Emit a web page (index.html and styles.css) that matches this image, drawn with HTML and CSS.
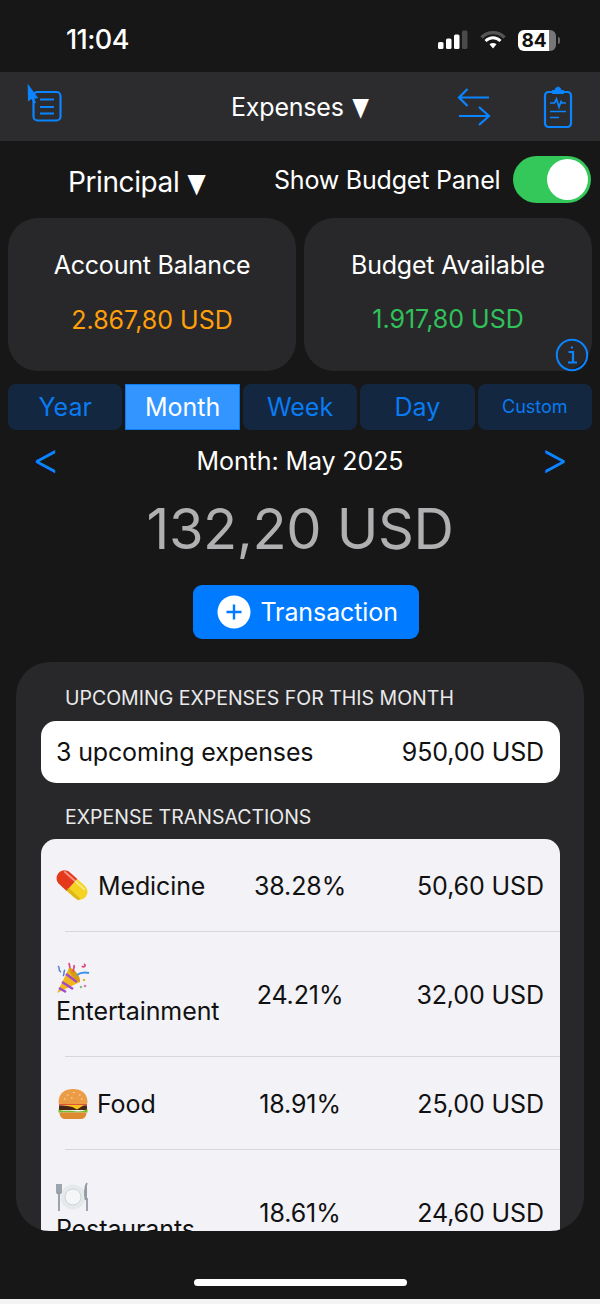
FILE: index.html
```html
<!DOCTYPE html>
<html lang="en">
<head>
<meta charset="utf-8">
<title>Expenses</title>
<link rel="stylesheet" href="styles.css">
</head>
<body>
<div class="screen">
  <header class="status">
    <span class="time">11:04</span>
    <div class="status-icons">
      <svg class="signal" width="30" height="20" viewBox="0 0 30 20"><rect x="0" y="12" width="5.500" height="7" rx="1.500" fill="#fff"/><rect x="8" y="8.500" width="5.500" height="10.500" rx="1.500" fill="#fff"/><rect x="16" y="4.500" width="5.500" height="14.500" rx="1.500" fill="#fff"/><rect x="24" y="0.500" width="5.500" height="18.500" rx="1.500" fill="#4a4a4a"/></svg>
      <svg class="wifi" width="26" height="20" viewBox="0 0 26 20"><path d="M1.500 7.500C8 1 18 1 24.500 7.500" fill="none" stroke="#555" stroke-width="3.400"/><path d="M5.500 11C10 6.800 16 6.800 20.500 11" fill="none" stroke="#fff" stroke-width="3"/><path d="M9.500 14.300C11.600 12.500 14.400 12.500 16.500 14.300L13 18.500Z" fill="#fff"/></svg>
      <div class="battery"><span class="battery-level">84</span><i class="battery-tip"></i></div>
    </div>
  </header>

  <nav class="navbar">
    <svg class="nav-list" width="38" height="42" viewBox="0 0 38 42"><rect x="7.500" y="9" width="27" height="28.500" rx="4" fill="none" stroke="#0a84ff" stroke-width="2.200"/><path d="M14 16.500H28M14 24H28M14 30.500H28" stroke="#0a84ff" stroke-width="2.200"/><path d="M1.700 0.800L12.300 15.200L8 15.500L10 19.800L8 20.500L5.500 16L2 18.500Z" fill="#0a84ff"/></svg>
    <div class="nav-title">Expenses <span class="tri">▼</span></div>
    <svg class="nav-swap" width="34" height="42" viewBox="0 0 34 42"><path d="M2 11.500H32M10.500 3L2 11.500L10.500 20M2 30H32M22 21L32 30L22 39" fill="none" stroke="#0a84ff" stroke-width="2.200"/></svg>
    <svg class="nav-clip" width="30" height="44" viewBox="0 0 30 44"><rect x="2" y="7" width="26" height="35" rx="3.500" fill="none" stroke="#0a84ff" stroke-width="2.200"/><path d="M9.500 8.500V5.500H12C12.500 1 17.500 1 18 5.500H20.500V8.500Z" fill="#0a84ff" stroke="#0a84ff"/><path d="M7 18H11.500L13.500 14L16 22L18 16.500L19 18H23M7 26.500H23M7 32.500H16" fill="none" stroke="#0a84ff" stroke-width="1.700"/></svg>
  </nav>

  <section class="account-row">
    <div class="account-picker">Principal <span class="tri tri-wide">▼</span></div>
    <div class="budget-toggle">
      <span>Show Budget Panel</span>
      <div class="switch"><i class="knob"></i></div>
    </div>
  </section>

  <section class="cards">
    <article class="card">
      <h2>Account Balance</h2>
      <p class="amount orange">2.867,80 USD</p>
    </article>
    <article class="card card-budget">
      <h2>Budget Available</h2>
      <p class="amount green">1.917,80 USD</p>
      <svg class="info" width="34" height="34" viewBox="0 0 34 34"><circle cx="17" cy="17" r="15.200" fill="none" stroke="#0a84ff" stroke-width="2"/><path d="M13.500 14H18V24M13 24.500H22M15.800 9.500H18" fill="none" stroke="#0a84ff" stroke-width="2.200"/></svg>
    </article>
  </section>

  <div class="tabs">
    <button class="tab">Year</button>
    <button class="tab tab-active">Month</button>
    <button class="tab">Week</button>
    <button class="tab">Day</button>
    <button class="tab tab-small">Custom</button>
  </div>

  <div class="period">
    <span class="chev">&lt;</span>
    <span class="period-label">Month: May 2025</span>
    <span class="chev">&gt;</span>
  </div>

  <div class="total">132,20 USD</div>

  <div class="action">
    <button class="add-btn">
      <svg width="34" height="34" viewBox="0 0 34 34"><circle cx="17" cy="17" r="16.500" fill="#fff"/><path d="M17 9.500V24.500M9.500 17H24.500" stroke="#007aff" stroke-width="2.400"/></svg>
      <span>Transaction</span>
    </button>
  </div>

  <main class="panel">
    <h3 class="section-title">UPCOMING EXPENSES FOR THIS MONTH</h3>
    <div class="upcoming"><span>3 upcoming expenses</span><span>950,00 USD</span></div>
    <h3 class="section-title second">EXPENSE TRANSACTIONS</h3>
    <div class="list">
      <div class="row">
        <div class="name"><svg class="emoji" width="32" height="32" viewBox="0 0 32 32"><g transform="rotate(42 16 16)"><path d="M16 8H6.500C1.500 8 -2 11.500 -2 16S1.500 24 6.500 24H16Z" fill="#e5391c"/><path d="M16 8H25.500C30.500 8 34 11.500 34 16S30.500 24 25.500 24H16Z" fill="#f4d321"/><path d="M2 11H28" stroke="#fff" stroke-opacity=".45" stroke-width="2" stroke-linecap="round"/><path d="M16 22H30" stroke="#c79a10" stroke-width="3" stroke-linecap="round" stroke-opacity=".5"/></g></svg> Medicine</div>
        <div class="pct">38.28%</div><div class="val">50,60 USD</div>
      </div>
      <div class="row row-tall">
        <div class="name"><svg class="emoji" width="34" height="32" viewBox="0 0 34 32"><path d="M1 31L13 6L24 20Z" fill="#f3b61f"/><path d="M6 20L17 27M3 26L10 30M10 12L21 20" stroke="#a24bc7" stroke-width="2.500"/><path d="M13 6C17 5 25 14 24 20C20 20 13 11 13 6Z" fill="#d99a12"/><path d="M21 13C25 10 29 10 33 11" fill="none" stroke="#3d94e8" stroke-width="2"/><path d="M2 4C5 6 1 8 5 10M7 14C9 12 7 9 9 8" fill="none" stroke="#4a7ed8" stroke-width="1.500"/><path d="M13 1L14 6M18 3C19 6 16 8 18 10M28 2C31 4 27 6 26 4" fill="none" stroke="#e0467f" stroke-width="1.700"/><circle cx="28" cy="18" r="1.300" fill="#e7b43a"/><circle cx="29" cy="24" r="1.300" fill="#d97aa8"/><circle cx="25" cy="25" r="1.200" fill="#7bc27b"/></svg> Entertainment</div>
        <div class="pct">24.21%</div><div class="val">32,00 USD</div>
      </div>
      <div class="row">
        <div class="name"><svg class="emoji emoji-shift" width="30" height="30" viewBox="0 0 30 30"><path d="M0.500 13.500C0.500 4 7 0 15 0S29.500 4 29.500 13.500C29.500 14.500 28.500 15 27.500 15H2.500C1.500 15 0.500 14.500 0.500 13.500Z" fill="#eb9c45"/><path d="M1 15H29V16.500H1Z" fill="#e2543a"/><path d="M1 16.500H29V21H1Z" fill="#4a2414"/><path d="M4 16H26L19 20.500L14.500 18Z" fill="#f8c31c"/><path d="M0.500 20C5 23 9 21 15 22S25 22.500 29.500 20V23.500H0.500Z" fill="#74bb2e"/><path d="M1.500 23.500H28.500C28.500 27.500 26 30 23 30H7C4 30 1.500 27.500 1.500 23.500Z" fill="#dd8a30"/><path d="M9 6H10.500M15 3.500H16.500M21 6H22.500M13 9H14.500M6 10H7.500M23 10H24.500" stroke="#fae3bd" stroke-width="1.200"/></svg> Food</div>
        <div class="pct">18.91%</div><div class="val">25,00 USD</div>
      </div>
      <div class="row row-tall row-last">
        <div class="name"><svg class="emoji" width="34" height="30" viewBox="0 0 34 30"><circle cx="17" cy="15" r="12.500" fill="#e6e9eb"/><circle cx="17" cy="15" r="8" fill="#f5f6f7" stroke="#cfd3d6"/><path d="M1 2V10C1 12 5 12 5 10V2M3 2V29" fill="none" stroke="#929ca5" stroke-width="1.800"/><path d="M31 1C28.500 5 28.500 13 29.500 17H31V29" fill="#929ca5" stroke="#929ca5" stroke-width="1.800"/></svg> Restaurants</div>
        <div class="pct">18.61%</div><div class="val">24,60 USD</div>
      </div>
    </div>
  </main>

  <footer class="home-area"><i class="home-bar"></i></footer>
</div>
</body>
</html>
```
FILE: styles.css
```css
* { box-sizing: border-box; }
html, body { margin: 0; padding: 0; background: #f4f4f4; }
body { font-family: Inter, "Liberation Sans", sans-serif; color: #fff; }
.screen { width: 600px; height: 1299px; overflow: hidden; display: flex; flex-direction: column; background: #171718; }

.status { height: 72px; padding: 22px 44px 0 66px; display: flex; justify-content: space-between; align-items: flex-start; }
.time { font-size: 27px; font-weight: 500; line-height: 36px; letter-spacing: -0.6px; }
.status-icons { display: flex; align-items: center; height: 36px; }
.signal { margin-right: 12px; }
.wifi { margin-right: 12px; }
.battery { position: relative; width: 38px; height: 21px; border-radius: 6px; background: linear-gradient(90deg, #fff 82%, #777 82%); display: flex; align-items: center; justify-content: center; padding-right: 6px; }
.battery-level { color: #111; font-size: 19px; font-weight: 700; line-height: 21px; }
.battery-tip { position: absolute; right: -4px; top: 7px; width: 2px; height: 7px; border-radius: 0 2px 2px 0; background: #666; }

.navbar { height: 69px; background: #2c2c2e; display: flex; align-items: center; position: relative; padding-left: 26px; }
.nav-list { margin-top: -6px; }
.nav-title { position: absolute; left: 231px; top: 20px; font-size: 25px; line-height: 30px; letter-spacing: -0.2px; }
.tri { display: inline-block; font-size: 19px; transform: scale(0.95, 1.35); line-height: 1; }
.tri-wide { transform: scale(1.05, 1.4); }
.nav-swap { margin-left: 393px; }
.nav-clip { margin-left: 52px; }

.account-row { height: 77px; display: flex; align-items: center; padding: 0 8px 0 68px; }
.account-picker { font-size: 28px; letter-spacing: -0.4px; margin-top: 4px; width: 206px; }
.budget-toggle { display: flex; align-items: center; gap: 13px; font-size: 25px; letter-spacing: -0.2px; }
.switch { width: 78px; height: 47px; border-radius: 24px; background: #34c759; padding: 3px 3px; display: flex; justify-content: flex-end; }
.knob { width: 41px; height: 41px; border-radius: 50%; background: #fff; }

.cards { display: flex; gap: 8px; padding: 0 8px; }
.card { flex: 1; height: 153px; border-radius: 30px; background: #28282a; text-align: center; position: relative; padding-top: 29px; }
.card h2 { margin: 0; font-size: 25px; font-weight: 400; line-height: 36px; letter-spacing: -0.2px; }
.amount { margin: 19px 0 0; font-size: 25px; line-height: 36px; }
.card-budget .amount { margin-top: 18px; }
.orange { color: #ff9f0a; }
.green { color: #30c15a; }
.info { position: absolute; right: 3px; bottom: -1px; }

.tabs { display: flex; gap: 3px; padding: 0 8px; margin-top: 13px; }
.tab { flex: 1; height: 46px; border: 0; border-radius: 8px; background: #132741; color: #0a7bf0; font: 400 25px/46px Inter, "Liberation Sans", sans-serif; padding: 0; }
.tab-active { background: #3395ff; color: #fff; border-radius: 0; box-shadow: inset 0 0 0 1px #0a7bf0; }
.tab-small { font-size: 18px; }

.period { display: flex; align-items: center; justify-content: space-between; padding: 0 34px 0 32px; height: 62px; }
.chev { color: #0a84ff; font-size: 44px; font-weight: 350; line-height: 40px; width: 26px; margin-top: -6px; }
.period-label { font-size: 25px; letter-spacing: -0.1px; margin-left: 2px; }

.total { text-align: center; color: #b0b0b2; font-size: 56px; line-height: 70px; height: 90px; letter-spacing: -0.4px; padding-top: 2px; }

.action { display: flex; justify-content: center; margin-top: 3px; padding-left: 11px; }
.add-btn { width: 226px; height: 54px; background: #007aff; border: 0; border-radius: 9px; color: #fff; display: flex; align-items: center; justify-content: flex-start; gap: 10px; font: 400 25px/54px Inter, "Liberation Sans", sans-serif; letter-spacing: -0.1px; padding: 0 0 0 24px; }

.panel { margin: 23px 16px 0; height: 569px; border-radius: 34px; background: #28282a; padding: 0 24.5px; overflow: hidden; }
.section-title { margin: 0; padding: 20px 0 0 24.5px; font-size: 19.5px; font-weight: 400; line-height: 32px; height: 59px; color: #eaeaea; }
.section-title.second { height: 56px; padding-top: 18px; }
.upcoming { height: 62px; background: #fff; border-radius: 15px; color: #111; display: flex; justify-content: space-between; align-items: center; padding: 0 15.5px; font-size: 25px; letter-spacing: -0.15px; }
.list { background: #f2f2f7; border-radius: 15px 15px 0 0; color: #111; height: 392px; overflow: hidden; padding-left: 15.5px; }
.row { display: grid; grid-template-columns: 168px 1fr 168px; align-items: center; height: 93px; padding-right: 15.5px; font-size: 25px; letter-spacing: -0.1px; position: relative; }
.row::after { content: ""; position: absolute; left: 9px; right: 0; bottom: 0; height: 1px; background: #d6d6db; }
.row-last::after { display: none; }
.row-tall { height: 125px; }
.name { line-height: 32px; }
.emoji { vertical-align: -6px; margin-right: 3px; }
.emoji-shift { margin-left: 2px; margin-right: 2px; }
.pct { text-align: center; }
.val { text-align: right; }

.home-area { flex: 1; display: flex; justify-content: center; padding-top: 48px; }
.home-bar { width: 213px; height: 7px; border-radius: 4px; background: #fff; }
```
